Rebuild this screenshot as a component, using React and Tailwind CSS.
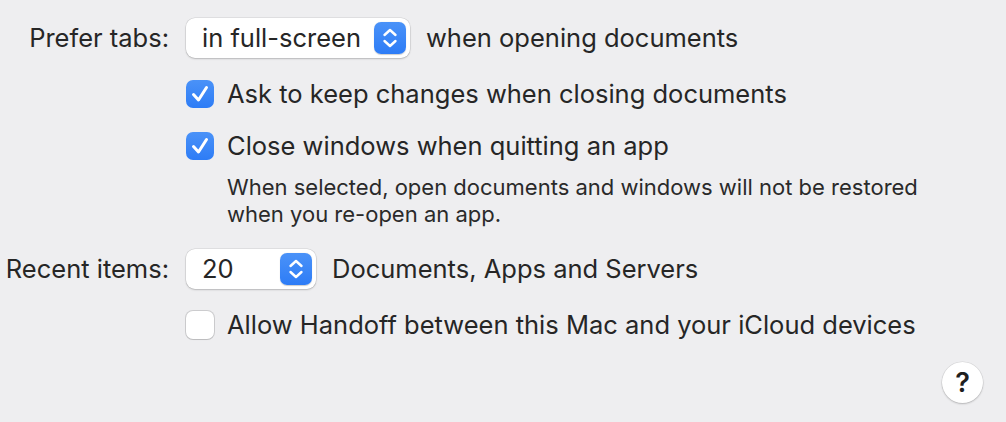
import React from "react";

const Stepper = () => (
  <div className="w-[32px] h-[32px] rounded-[7px] bg-gradient-to-b from-[#4a92f8] to-[#2d7cf6] flex items-center justify-center shadow-[0_0.5px_1px_rgba(0,0,0,0.2)]">
    <svg width="18" height="24" viewBox="0 0 18 24" fill="none" stroke="white" strokeWidth="2.4" strokeLinecap="round" strokeLinejoin="round">
      <path d="M3.5 9 L9 4 L14.5 9" />
      <path d="M3.5 15 L9 20 L14.5 15" />
    </svg>
  </div>
);

const Popup = ({ value, width }) => (
  <div
    className={`h-[40px] bg-white rounded-[9px] shadow-[0_0_0_0.5px_rgba(0,0,0,0.12),0_1px_2px_rgba(0,0,0,0.18)] flex items-center justify-between pl-[16px] pr-[4px] ${width}`}
  >
    <span>{value}</span>
    <Stepper />
  </div>
);

const Checkbox = ({ checked }) =>
  checked ? (
    <div className="w-[28px] h-[28px] rounded-[7px] bg-gradient-to-b from-[#4a92f8] to-[#2d7cf6] flex items-center justify-center shrink-0">
      <svg width="20" height="20" viewBox="0 0 20 20" fill="none" stroke="white" strokeWidth="3" strokeLinecap="round" strokeLinejoin="round">
        <path d="M3.5 10.5 L8.5 16 L16.5 3.5" />
      </svg>
    </div>
  ) : (
    <div className="w-[28px] h-[28px] rounded-[7px] bg-white shrink-0 shadow-[0_0_0_1px_rgba(0,0,0,0.14),0_1px_1px_rgba(0,0,0,0.08)]" />
  );

const Label = ({ children }) => (
  <div className="w-[170px] shrink-0 text-right pr-[1px] whitespace-nowrap">{children}</div>
);

export default function App() {
  return (
    <div
      className="w-[1006px] h-[422px] bg-[#eeeef0] text-[#262626] text-[25.5px] leading-none flex flex-col pt-[18px] overflow-hidden"
      style={{ fontFamily: "Inter, 'Noto Sans', sans-serif" }}
    >
      {/* Prefer tabs */}
      <div className="flex items-center h-[40px] whitespace-nowrap">
        <Label>Prefer tabs:</Label>
        <div className="ml-[16px]">
          <Popup value="in full-screen" width="w-[224px]" />
        </div>
        <span className="ml-[16px]">when opening documents</span>
      </div>

      {/* Ask to keep changes */}
      <div className="flex items-center h-[28px] mt-[22px] pl-[186px] whitespace-nowrap">
        <Checkbox checked />
        <span className="ml-[13px]">Ask to keep changes when closing documents</span>
      </div>

      {/* Close windows */}
      <div className="flex items-center h-[28px] mt-[24px] pl-[186px] whitespace-nowrap">
        <Checkbox checked />
        <span className="ml-[13px]">Close windows when quitting an app</span>
      </div>

      <div className="mt-[14px] pl-[227px] text-[22px] leading-[27px] text-[#2a2a2a] whitespace-nowrap">
        <p>When selected, open documents and windows will not be restored</p>
        <p>when you re-open an app.</p>
      </div>

      {/* Recent items */}
      <div className="flex items-center h-[40px] mt-[21px] whitespace-nowrap">
        <Label>Recent items:</Label>
        <div className="ml-[16px]">
          <Popup value="20" width="w-[130px]" />
        </div>
        <span className="ml-[16px]">Documents, Apps and Servers</span>
      </div>

      {/* Handoff */}
      <div className="flex items-center h-[28px] mt-[22px] pl-[186px] whitespace-nowrap">
        <Checkbox checked={false} />
        <span className="ml-[13px]">Allow Handoff between this Mac and your iCloud devices</span>
      </div>

      <div className="flex justify-end pr-[23px] mt-[23px]">
        <button className="w-[41px] h-[41px] rounded-full bg-white shadow-[0_0_0_0.5px_rgba(0,0,0,0.1),0_1px_2px_rgba(0,0,0,0.2)] flex items-center justify-center text-[27px] font-semibold text-[#1f1f1f]">
          ?
        </button>
      </div>
    </div>
  );
}
